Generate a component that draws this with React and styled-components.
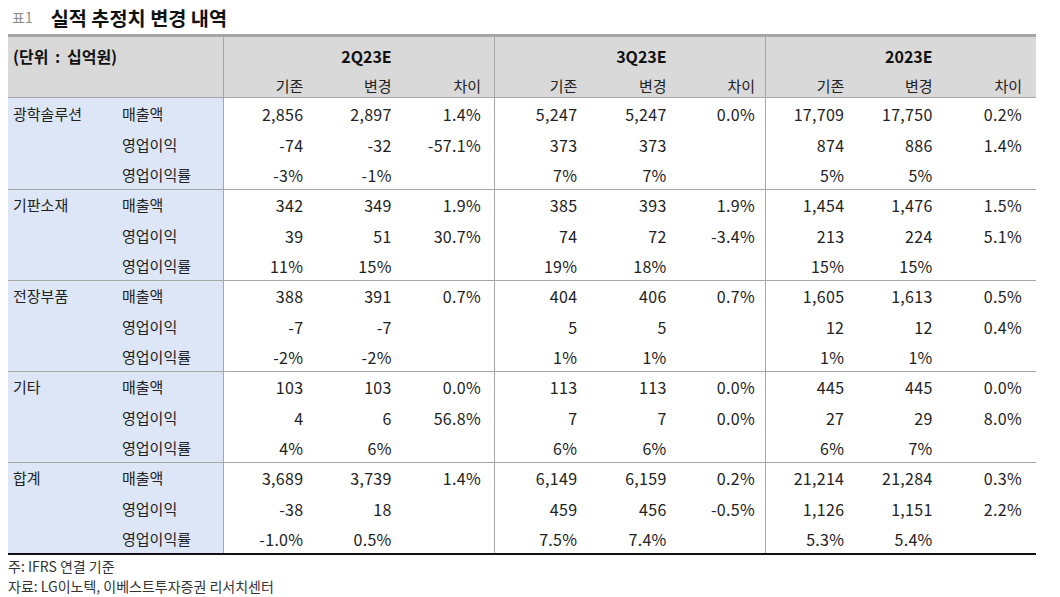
import React from "react";
import styled, { createGlobalStyle } from "styled-components";

const GlobalStyle = createGlobalStyle`
  body {
    margin: 0;
    background: #ffffff;
    font-family: "Noto Sans CJK KR", "Noto Sans", sans-serif;
    color: #222222;
  }
`;

const Page = styled.div`
  padding: 0 24px 0 8px;
  width: 1028px;
`;

const TitleBar = styled.div`
  height: 34px;
  display: flex;
  align-items: center;
  gap: 18px;
  padding-left: 4px;
`;

const TitleTag = styled.span`
  font-size: 14px;
  color: #8c8c8c;
`;

const TitleText = styled.span`
  font-size: 19.7px;
  font-weight: 700;
  color: #111111;
`;

const Table = styled.table`
  width: 1028px;
  border-collapse: separate;
  border-spacing: 0;
  table-layout: fixed;
  border-top: 3px solid #a6a6a6;
  border-bottom: 2px solid #111111;
  font-size: 15px;
  line-height: 20px;
`;

const HeadRow = styled.tr`
  height: ${(p) => (p.$last ? 31 : 30)}px;
  background: #d9d9d9;
`;

const HeadCell = styled.th`
  box-sizing: border-box;
  vertical-align: top;
  padding: ${(p) => `9px ${p.$pad || 0}px 0 ${p.$left ? 5 : 0}px`};
  text-align: ${(p) => (p.$left ? "left" : "right")};
  font-size: ${(p) => (p.$bold ? 16 : 15)}px;
  font-weight: ${(p) => (p.$bold ? 700 : 400)};
  color: ${(p) => (p.$bold ? "#111111" : "#222222")};
  word-spacing: ${(p) => (p.$left ? 3 : 0)}px;
  border-left: ${(p) => (p.$divider ? "1px solid #a6a6a6" : "none")};
  border-bottom: ${(p) => (p.$last ? "1px solid #a6a6a6" : "none")};
  white-space: nowrap;
`;

const Row = styled.tr`
  height: ${(p) => (p.$first ? 31 : 30)}px;
`;

const cellEdge = (p) => `
  box-sizing: border-box;
  vertical-align: top;
  white-space: nowrap;
  border-top: ${p.$rule ? "1px solid #a6a6a6" : "none"};
  padding-top: ${p.$rule ? 5 : 6}px;
`;

const LabelCell = styled.td`
  ${cellEdge}
  background: #dce6f7;
  padding-left: 5px;
  text-align: left;
`;

const ValueCell = styled.td`
  ${cellEdge}
  padding-right: ${(p) => p.$pad}px;
  text-align: right;
  font-size: 16px;
  letter-spacing: 0.3px;
  border-left: ${(p) => (p.$divider ? "1px solid #a6a6a6" : "none")};
`;

const Notes = styled.div`
  padding-top: 1px;
  font-size: 14px;
  color: #333333;
  line-height: 20px;
`;

const periods = ["2Q23E", "3Q23E", "2023E"];
const subHeads = ["기존", "변경", "차이"];
const metrics = ["매출액", "영업이익", "영업이익률"];
// right padding of each value column, so figures line up as in the report
const pads = [10, 12, 13, 7, 8, 10, 11, 13, 14];

const groups = [
  {
    name: "광학솔루션",
    rows: [
      ["2,856", "2,897", "1.4%", "5,247", "5,247", "0.0%", "17,709", "17,750", "0.2%"],
      ["-74", "-32", "-57.1%", "373", "373", "", "874", "886", "1.4%"],
      ["-3%", "-1%", "", "7%", "7%", "", "5%", "5%", ""],
    ],
  },
  {
    name: "기판소재",
    rows: [
      ["342", "349", "1.9%", "385", "393", "1.9%", "1,454", "1,476", "1.5%"],
      ["39", "51", "30.7%", "74", "72", "-3.4%", "213", "224", "5.1%"],
      ["11%", "15%", "", "19%", "18%", "", "15%", "15%", ""],
    ],
  },
  {
    name: "전장부품",
    rows: [
      ["388", "391", "0.7%", "404", "406", "0.7%", "1,605", "1,613", "0.5%"],
      ["-7", "-7", "", "5", "5", "", "12", "12", "0.4%"],
      ["-2%", "-2%", "", "1%", "1%", "", "1%", "1%", ""],
    ],
  },
  {
    name: "기타",
    rows: [
      ["103", "103", "0.0%", "113", "113", "0.0%", "445", "445", "0.0%"],
      ["4", "6", "56.8%", "7", "7", "0.0%", "27", "29", "8.0%"],
      ["4%", "6%", "", "6%", "6%", "", "6%", "7%", ""],
    ],
  },
  {
    name: "합계",
    rows: [
      ["3,689", "3,739", "1.4%", "6,149", "6,159", "0.2%", "21,214", "21,284", "0.3%"],
      ["-38", "18", "", "459", "456", "-0.5%", "1,126", "1,151", "2.2%"],
      ["-1.0%", "0.5%", "", "7.5%", "7.4%", "", "5.3%", "5.4%", ""],
    ],
  },
];

export default function App() {
  return (
    <Page>
      <GlobalStyle />
      <TitleBar>
        <TitleTag>표1</TitleTag>
        <TitleText>실적 추정치 변경 내역</TitleText>
      </TitleBar>
      <Table>
        <colgroup>
          <col style={{ width: 109 }} />
          <col style={{ width: 106 }} />
          {pads.map((_, i) => (
            <col key={i} style={{ width: 271 / 3 }} />
          ))}
        </colgroup>
        <thead>
          <HeadRow>
            <HeadCell colSpan={2} $left $bold>
              (단위 : 십억원)
            </HeadCell>
            {periods.map((p, g) =>
              subHeads.map((s, i) => (
                <HeadCell key={p + s} $divider={i === 0} $bold $pad={pads[g * 3 + i]}>
                  {i === 1 ? p : ""}
                </HeadCell>
              ))
            )}
          </HeadRow>
          <HeadRow $last>
            <HeadCell colSpan={2} $last />
            {periods.map((p, g) =>
              subHeads.map((s, i) => (
                <HeadCell key={p + s} $last $divider={i === 0} $pad={pads[g * 3 + i]}>
                  {s}
                </HeadCell>
              ))
            )}
          </HeadRow>
        </thead>
        <tbody>
          {groups.map((g, gi) =>
            g.rows.map((vals, r) => {
              const first = r === 0;
              const rule = first && gi > 0;
              return (
                <Row key={g.name + r} $first={first}>
                  <LabelCell $rule={rule}>{first ? g.name : ""}</LabelCell>
                  <LabelCell $rule={rule}>{metrics[r]}</LabelCell>
                  {vals.map((v, i) => (
                    <ValueCell key={i} $rule={rule} $divider={i % 3 === 0} $pad={pads[i]}>
                      {v}
                    </ValueCell>
                  ))}
                </Row>
              );
            })
          )}
        </tbody>
      </Table>
      <Notes>
        <div>주: IFRS 연결 기준</div>
        <div>자료: LG이노텍, 이베스트투자증권 리서치센터</div>
      </Notes>
    </Page>
  );
}
